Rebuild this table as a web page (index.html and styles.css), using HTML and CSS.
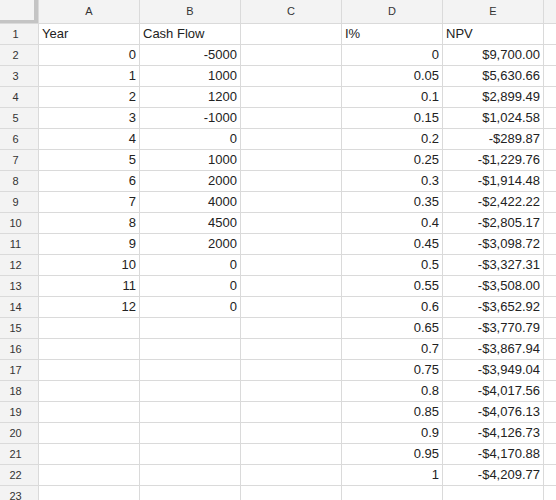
FILE: index.html
```html
<!DOCTYPE html>
<html>
<head>
<meta charset="utf-8">
<link rel="stylesheet" href="styles.css">
</head>
<body>
<div class="sheet">
  <div class="row head"><div class="corner"></div><div class="ch">A</div><div class="ch">B</div><div class="ch">C</div><div class="ch">D</div><div class="ch">E</div><div class="ch"></div></div>
  <div class="row"><div class="rh">1</div><div class="c">Year</div><div class="c">Cash Flow</div><div class="c"></div><div class="c">I%</div><div class="c">NPV</div><div class="c"></div></div>
  <div class="row"><div class="rh">2</div><div class="c n">0</div><div class="c n">-5000</div><div class="c"></div><div class="c n">0</div><div class="c n">$9,700.00</div><div class="c"></div></div>
  <div class="row"><div class="rh">3</div><div class="c n">1</div><div class="c n">1000</div><div class="c"></div><div class="c n">0.05</div><div class="c n">$5,630.66</div><div class="c"></div></div>
  <div class="row"><div class="rh">4</div><div class="c n">2</div><div class="c n">1200</div><div class="c"></div><div class="c n">0.1</div><div class="c n">$2,899.49</div><div class="c"></div></div>
  <div class="row"><div class="rh">5</div><div class="c n">3</div><div class="c n">-1000</div><div class="c"></div><div class="c n">0.15</div><div class="c n">$1,024.58</div><div class="c"></div></div>
  <div class="row"><div class="rh">6</div><div class="c n">4</div><div class="c n">0</div><div class="c"></div><div class="c n">0.2</div><div class="c n">-$289.87</div><div class="c"></div></div>
  <div class="row"><div class="rh">7</div><div class="c n">5</div><div class="c n">1000</div><div class="c"></div><div class="c n">0.25</div><div class="c n">-$1,229.76</div><div class="c"></div></div>
  <div class="row"><div class="rh">8</div><div class="c n">6</div><div class="c n">2000</div><div class="c"></div><div class="c n">0.3</div><div class="c n">-$1,914.48</div><div class="c"></div></div>
  <div class="row"><div class="rh">9</div><div class="c n">7</div><div class="c n">4000</div><div class="c"></div><div class="c n">0.35</div><div class="c n">-$2,422.22</div><div class="c"></div></div>
  <div class="row"><div class="rh">10</div><div class="c n">8</div><div class="c n">4500</div><div class="c"></div><div class="c n">0.4</div><div class="c n">-$2,805.17</div><div class="c"></div></div>
  <div class="row"><div class="rh">11</div><div class="c n">9</div><div class="c n">2000</div><div class="c"></div><div class="c n">0.45</div><div class="c n">-$3,098.72</div><div class="c"></div></div>
  <div class="row"><div class="rh">12</div><div class="c n">10</div><div class="c n">0</div><div class="c"></div><div class="c n">0.5</div><div class="c n">-$3,327.31</div><div class="c"></div></div>
  <div class="row"><div class="rh">13</div><div class="c n">11</div><div class="c n">0</div><div class="c"></div><div class="c n">0.55</div><div class="c n">-$3,508.00</div><div class="c"></div></div>
  <div class="row"><div class="rh">14</div><div class="c n">12</div><div class="c n">0</div><div class="c"></div><div class="c n">0.6</div><div class="c n">-$3,652.92</div><div class="c"></div></div>
  <div class="row"><div class="rh">15</div><div class="c"></div><div class="c"></div><div class="c"></div><div class="c n">0.65</div><div class="c n">-$3,770.79</div><div class="c"></div></div>
  <div class="row"><div class="rh">16</div><div class="c"></div><div class="c"></div><div class="c"></div><div class="c n">0.7</div><div class="c n">-$3,867.94</div><div class="c"></div></div>
  <div class="row"><div class="rh">17</div><div class="c"></div><div class="c"></div><div class="c"></div><div class="c n">0.75</div><div class="c n">-$3,949.04</div><div class="c"></div></div>
  <div class="row"><div class="rh">18</div><div class="c"></div><div class="c"></div><div class="c"></div><div class="c n">0.8</div><div class="c n">-$4,017.56</div><div class="c"></div></div>
  <div class="row"><div class="rh">19</div><div class="c"></div><div class="c"></div><div class="c"></div><div class="c n">0.85</div><div class="c n">-$4,076.13</div><div class="c"></div></div>
  <div class="row"><div class="rh">20</div><div class="c"></div><div class="c"></div><div class="c"></div><div class="c n">0.9</div><div class="c n">-$4,126.73</div><div class="c"></div></div>
  <div class="row"><div class="rh">21</div><div class="c"></div><div class="c"></div><div class="c"></div><div class="c n">0.95</div><div class="c n">-$4,170.88</div><div class="c"></div></div>
  <div class="row"><div class="rh">22</div><div class="c"></div><div class="c"></div><div class="c"></div><div class="c n">1</div><div class="c n">-$4,209.77</div><div class="c"></div></div>
  <div class="row"><div class="rh">23</div><div class="c"></div><div class="c"></div><div class="c"></div><div class="c"></div><div class="c"></div><div class="c"></div></div>
</div>
</body>
</html>
```

FILE: styles.css
```css
html, body {
  margin: 0;
  padding: 0;
  background: #ffffff;
  overflow: hidden;
}

.sheet {
  display: flex;
  flex-direction: column;
  gap: 1px;
  width: 556px;
  height: 500px;
  overflow: hidden;
  background: #dadada;
  font-family: "Liberation Sans", Arial, sans-serif;
}

.row {
  display: grid;
  grid-template-columns: 38px repeat(5, 100px) 12px;
  column-gap: 1px;
  height: 20px;
  flex: none;
}

.row.head {
  height: 23px;
}

.corner {
  background: #f3f3f3;
  box-shadow: inset -4px -3px 0 #c4c4c4;
}

.ch {
  background: #f3f3f3;
  color: #333333;
  font-size: 11px;
  line-height: 23px;
  text-align: center;
  overflow: hidden;
}

.rh {
  background: #f3f3f3;
  color: #333333;
  font-size: 11px;
  line-height: 20px;
  text-align: center;
  padding-right: 7px;
  overflow: hidden;
}

.c {
  background: #ffffff;
  color: #222222;
  font-size: 13px;
  line-height: 20px;
  padding: 0 3px;
  white-space: nowrap;
  overflow: hidden;
}

.n {
  text-align: right;
}
```
